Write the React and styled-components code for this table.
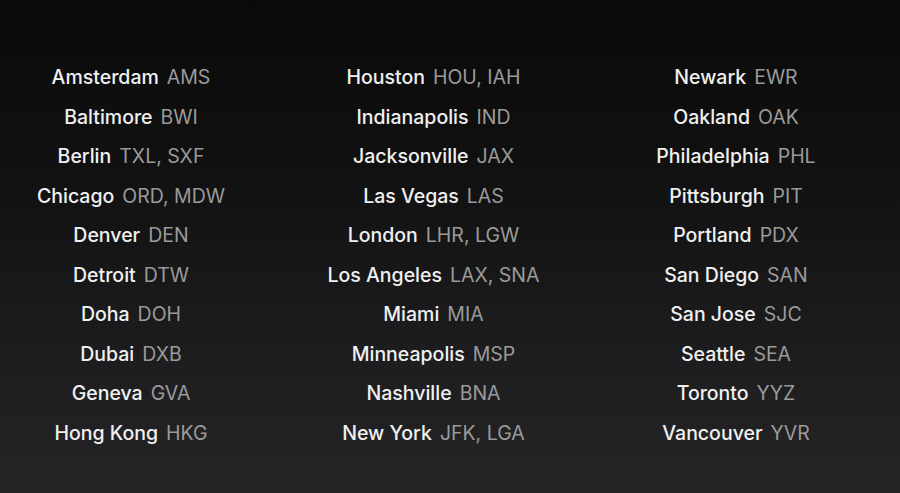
import React from "react";
import styled, { createGlobalStyle } from "styled-components";

const columns = [
  [
    ["Amsterdam", "AMS"],
    ["Baltimore", "BWI"],
    ["Berlin", "TXL, SXF"],
    ["Chicago", "ORD, MDW"],
    ["Denver", "DEN"],
    ["Detroit", "DTW"],
    ["Doha", "DOH"],
    ["Dubai", "DXB"],
    ["Geneva", "GVA"],
    ["Hong Kong", "HKG"],
  ],
  [
    ["Houston", "HOU, IAH"],
    ["Indianapolis", "IND"],
    ["Jacksonville", "JAX"],
    ["Las Vegas", "LAS"],
    ["London", "LHR, LGW"],
    ["Los Angeles", "LAX, SNA"],
    ["Miami", "MIA"],
    ["Minneapolis", "MSP"],
    ["Nashville", "BNA"],
    ["New York", "JFK, LGA"],
  ],
  [
    ["Newark", "EWR"],
    ["Oakland", "OAK"],
    ["Philadelphia", "PHL"],
    ["Pittsburgh", "PIT"],
    ["Portland", "PDX"],
    ["San Diego", "SAN"],
    ["San Jose", "SJC"],
    ["Seattle", "SEA"],
    ["Toronto", "YYZ"],
    ["Vancouver", "YVR"],
  ],
];

const GlobalStyle = createGlobalStyle`
  html, body {
    margin: 0;
    padding: 0;
    background: #0a0a0a;
  }
`;

const Screen = styled.div`
  width: 900px;
  height: 493px;
  box-sizing: border-box;
  padding: 58px 0 0 1px;
  background: linear-gradient(180deg, #0a0a0a 0%, #111112 35%, #1e1e20 75%, #252527 100%);
  display: grid;
  grid-template-columns: repeat(3, 260px);
  column-gap: 42.5px;
  align-content: start;
  font-family: Inter, "Liberation Sans", sans-serif;
`;

const Column = styled.div`
  display: flex;
  flex-direction: column;
  align-items: center;
`;

const Row = styled.div`
  height: 39.55px;
  line-height: 39.55px;
  font-size: 19.5px;
  white-space: nowrap;
`;

const City = styled.span`
  color: #f0f0f0;
  font-weight: 500;
`;

const Code = styled.span`
  color: #9a9a9a;
  font-weight: 400;
  margin-left: 8px;
`;

export default function App() {
  return (
    <>
      <GlobalStyle />
      <Screen>
        {columns.map((col, i) => (
          <Column key={i}>
            {col.map(([city, code]) => (
              <Row key={city}>
                <City>{city}</City>
                <Code>{code}</Code>
              </Row>
            ))}
          </Column>
        ))}
      </Screen>
    </>
  );
}
